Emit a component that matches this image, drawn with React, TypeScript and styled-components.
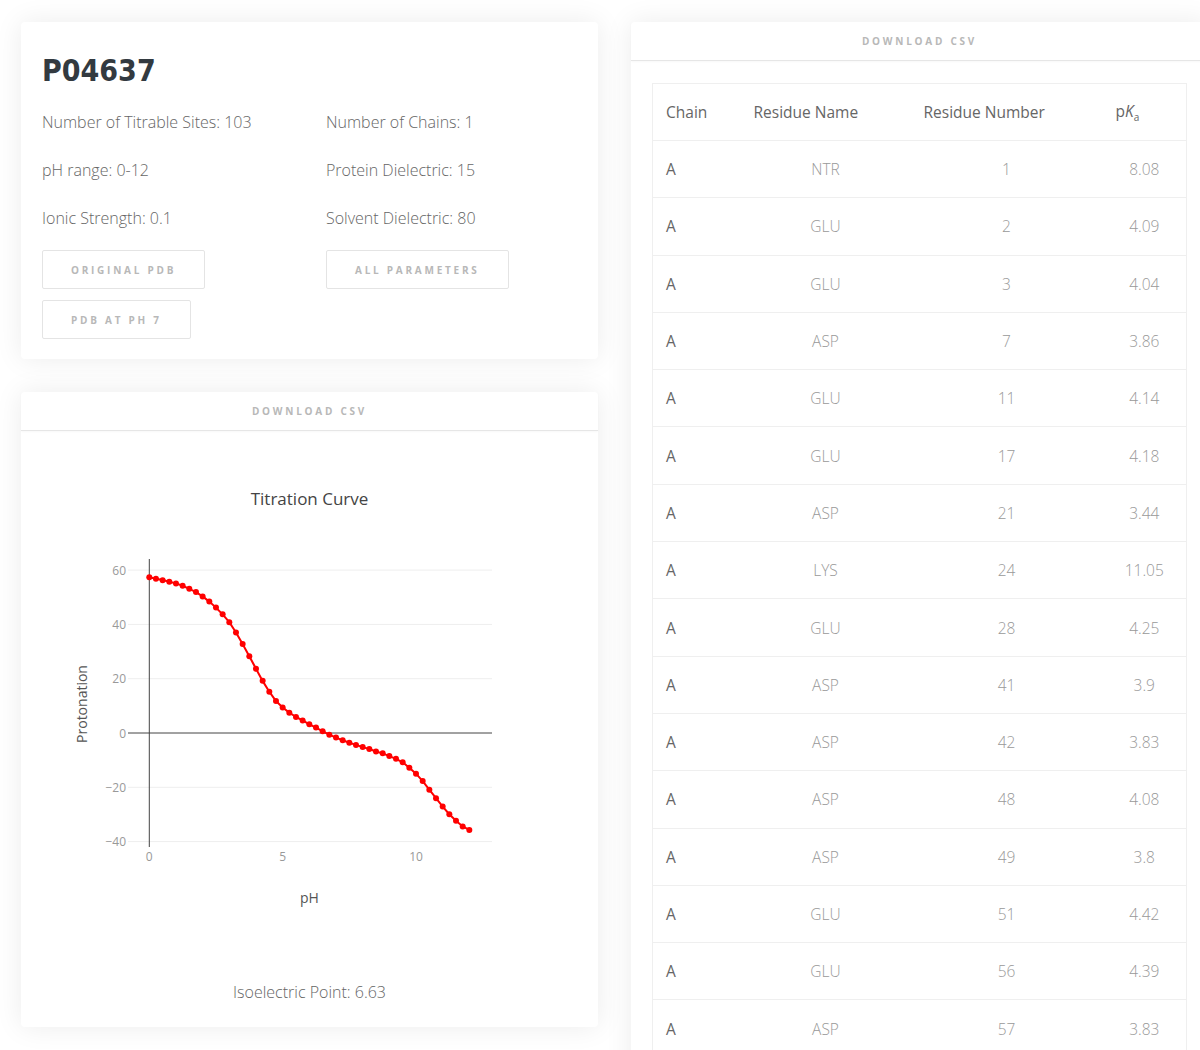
import React from 'react';
import styled, { createGlobalStyle } from 'styled-components';

const GlobalStyle = createGlobalStyle`
  html, body {
    margin: 0;
    padding: 0;
    background: #fff;
    overflow: hidden;
  }
  body {
    font-family: "Open Sans", "DejaVu Sans", sans-serif;
    color: #666;
  }
`;

const Page = styled.div`
  display: grid;
  grid-template-columns: 577px 577px;
  column-gap: 33px;
  align-items: start;
  padding: 22px 21px;
  width: 1300px;
`;

const Column = styled.div`
  display: flex;
  flex-direction: column;
  gap: 33px;
`;

const Card = styled.div`
  background: #fff;
  border-radius: 4px;
  box-shadow: 0 0 28px rgba(0, 0, 0, 0.08);
`;

const InfoCard = styled(Card)`
  padding: 29px 21px 20px;
`;

const Title = styled.h1`
  margin: 0;
  font-family: "DejaVu Sans Condensed", "DejaVu Sans", sans-serif;
  font-stretch: condensed;
  font-weight: 700;
  font-size: 30px;
  line-height: 40px;
  color: #333a40;
`;

const InfoGrid = styled.div`
  display: grid;
  grid-template-columns: 284px 1fr;
  row-gap: 24px;
  margin-top: 19px;
`;

const Info = styled.div`
  font-weight: 300;
  font-size: 16px;
  line-height: 24px;
  color: #666;
`;

const ButtonGrid = styled.div`
  display: grid;
  grid-template-columns: 284px 1fr;
  row-gap: 11px;
  margin-top: 20px;
  justify-items: start;
`;

const OutlineButton = styled.button`
  height: 39px;
  padding: 0 28px;
  background: #fff;
  border: 1px solid #e4e4e4;
  border-radius: 2px;
  font-family: "Open Sans", sans-serif;
  font-weight: 700;
  font-size: 10px;
  letter-spacing: 2.75px;
  text-transform: uppercase;
  color: #b8b8b8;
`;

const CardHeader = styled.div`
  height: 38px;
  display: flex;
  align-items: center;
  justify-content: center;
  border-bottom: 1px solid #e6e6e6;
  box-shadow: 0 1px 2px rgba(0, 0, 0, 0.03);
  font-weight: 700;
  font-size: 10px;
  letter-spacing: 2.75px;
  text-transform: uppercase;
  color: #b8b8b8;
`;

const PlotCard = styled(Card)`
  padding-bottom: 23px;
`;

const Footer = styled.div`
  margin-top: 29px;
  text-align: center;
  font-weight: 300;
  font-size: 16px;
  line-height: 24px;
  color: #666;
`;

const TableCard = styled(Card)`
  padding-bottom: 40px;
`;

const TableWrap = styled.div`
  padding: 22px 21px 0;
`;

const Table = styled.table`
  width: 534px;
  border-collapse: collapse;
  border: 1px solid #efefef;
  table-layout: fixed;
`;

const Th = styled.th`
  box-sizing: border-box;
  height: 57px;
  padding: 0 13px;
  text-align: left;
  font-weight: 400;
  font-size: 15.5px;
  color: #666;
  white-space: nowrap;
  border-bottom: 1px solid #efefef;
`;

const Td = styled.td<{ align?: string; strong?: boolean }>`
  height: 56.3px;
  padding: 0 13px;
  text-align: ${({ align }) => align || 'center'};
  font-size: 15.5px;
  font-weight: ${({ strong }) => (strong ? 400 : 300)};
  color: ${({ strong }) => (strong ? '#666' : '#999')};
  border-bottom: 1px solid #efefef;
`;

const residues: [string, string, number, string][] = [
  ['A', 'NTR', 1, '8.08'],
  ['A', 'GLU', 2, '4.09'],
  ['A', 'GLU', 3, '4.04'],
  ['A', 'ASP', 7, '3.86'],
  ['A', 'GLU', 11, '4.14'],
  ['A', 'GLU', 17, '4.18'],
  ['A', 'ASP', 21, '3.44'],
  ['A', 'LYS', 24, '11.05'],
  ['A', 'GLU', 28, '4.25'],
  ['A', 'ASP', 41, '3.9'],
  ['A', 'ASP', 42, '3.83'],
  ['A', 'ASP', 48, '4.08'],
  ['A', 'ASP', 49, '3.8'],
  ['A', 'GLU', 51, '4.42'],
  ['A', 'GLU', 56, '4.39'],
  ['A', 'ASP', 57, '3.83'],
  ['A', 'GLU', 62, '4.21'],
  ['A', 'GLU', 68, '4.35'],
];

// protonation sampled every 0.25 pH from 0 to 12
const protonation = [
  57.4, 56.8, 56.3, 55.7, 55.1, 54.2, 53.1, 51.9, 50.3, 48.4, 46.2, 43.7, 40.8,
  37.0, 32.8, 28.3, 23.7, 19.2, 15.2, 11.8, 9.4, 7.5, 5.9, 4.6, 3.2, 2.0, 0.6,
  -0.6, -1.7, -2.7, -3.6, -4.4, -5.2, -5.9, -6.8, -7.5, -8.5, -9.5, -10.8,
  -12.8, -15.0, -17.7, -20.9, -24.0, -27.1, -29.9, -32.3, -34.4, -35.7,
];

const px = (ph: number) => 128.3 + ph * 26.67;
const py = (v: number) => 302 - v * 2.715;

const TitrationPlot: React.FC = () => {
  const points = protonation.map((v, i) => [px(i * 0.25), py(v)]);
  const path = points.map(([x, y], i) => `${i ? 'L' : 'M'}${x.toFixed(1)},${y.toFixed(1)}`).join(' ');
  const yTicks = [60, 40, 20, 0, -20, -40];
  return (
    <svg width="577" height="520" style={{ display: 'block' }} fontFamily='"Open Sans", sans-serif'>
      <text x="288.5" y="74" textAnchor="middle" fontSize="17" fill="#444">
        Titration Curve
      </text>
      {yTicks.filter(t => t !== 0).map(t => (
        <line key={t} x1="107" x2="471" y1={py(t)} y2={py(t)} stroke="#eee" strokeWidth="1" />
      ))}
      <line x1="107" x2="471" y1={py(0)} y2={py(0)} stroke="#444" strokeWidth="1" />
      <line x1={px(0)} x2={px(0)} y1="128" y2="416" stroke="#444" strokeWidth="1" />
      {yTicks.map(t => (
        <text key={t} x="105" y={py(t) + 4.5} textAnchor="end" fontSize="12" fill="#999">
          {t < 0 ? `\u2212${-t}` : t}
        </text>
      ))}
      {[0, 5, 10].map(t => (
        <text key={t} x={px(t)} y="430" textAnchor="middle" fontSize="12" fill="#999">
          {t}
        </text>
      ))}
      <text x="61" y="273" textAnchor="middle" fontSize="14" fill="#555" transform="rotate(-90 61 273)" dy="5">
        Protonation
      </text>
      <text x="288.5" y="472" textAnchor="middle" fontSize="14" fill="#555">
        pH
      </text>
      <path d={path} fill="none" stroke="#f00" strokeWidth="2" />
      {points.map(([x, y], i) => (
        <circle key={i} cx={x} cy={y} r="3" fill="#f00" />
      ))}
    </svg>
  );
};

export default function App() {
  return (
    <>
      <GlobalStyle />
      <Page>
        <Column>
          <InfoCard>
            <Title>P04637</Title>
            <InfoGrid>
              <Info>Number of Titrable Sites: 103</Info>
              <Info>Number of Chains: 1</Info>
              <Info>pH range: 0-12</Info>
              <Info>Protein Dielectric: 15</Info>
              <Info>Ionic Strength: 0.1</Info>
              <Info>Solvent Dielectric: 80</Info>
            </InfoGrid>
            <ButtonGrid>
              <OutlineButton>Original PDB</OutlineButton>
              <OutlineButton>All Parameters</OutlineButton>
              <OutlineButton>PDB at pH 7</OutlineButton>
            </ButtonGrid>
          </InfoCard>
          <PlotCard>
            <CardHeader>Download CSV</CardHeader>
            <TitrationPlot />
            <Footer>Isoelectric Point: 6.63</Footer>
          </PlotCard>
        </Column>
        <TableCard>
          <CardHeader>Download CSV</CardHeader>
          <TableWrap>
            <Table>
              <colgroup>
                <col style={{ width: 88 }} />
                <col style={{ width: 170 }} />
                <col style={{ width: 192 }} />
                <col style={{ width: 84 }} />
              </colgroup>
              <thead>
                <tr>
                  <Th>Chain</Th>
                  <Th>Residue Name</Th>
                  <Th>Residue Number</Th>
                  <Th>
                    p<i>K</i>
                    <sub style={{ fontSize: '10px' }}>a</sub>
                  </Th>
                </tr>
              </thead>
              <tbody>
                {residues.map(([chain, name, num, pka]) => (
                  <tr key={num}>
                    <Td align="left" strong>{chain}</Td>
                    <Td>{name}</Td>
                    <Td>{num}</Td>
                    <Td>{pka}</Td>
                  </tr>
                ))}
              </tbody>
            </Table>
          </TableWrap>
        </TableCard>
      </Page>
    </>
  );
}
